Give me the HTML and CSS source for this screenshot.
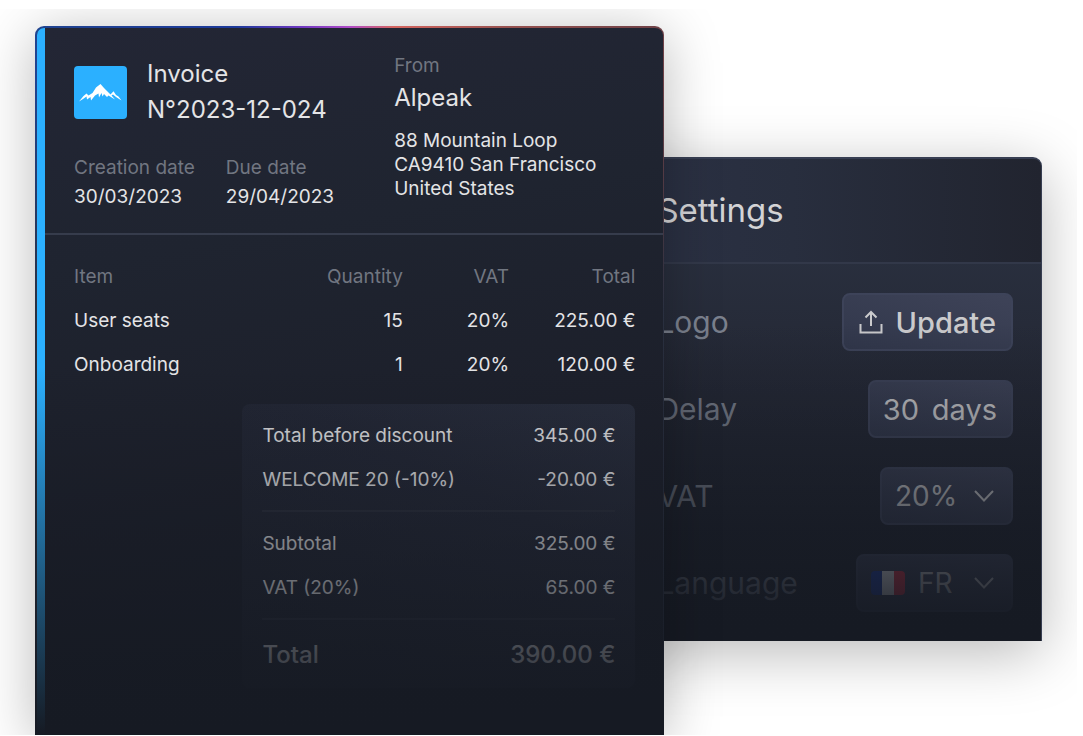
FILE: index.html
```html
<!DOCTYPE html>
<html lang="en">
<head>
<meta charset="utf-8">
<meta name="viewport" content="width=device-width, initial-scale=1">
<title>Invoice N°2023-12-024</title>
<link rel="stylesheet" href="styles.css">
</head>
<body>
<main class="scene">
  <article class="invoice">
    <header class="invoice-header">
      <div class="invoice-identity">
        <div class="invoice-title">
          <svg class="brand" viewBox="0 0 53 53" aria-hidden="true">
            <rect width="53" height="53" rx="4" fill="#2bb0ff"/>
            <path fill="#fff" d="M5 35.500L9.500 30L12.500 27.500L14.500 29.500L18.500 27L22 21.500L26.500 18L30 22L34.500 26.500L36.500 28.500L39.500 25.200L42 29L44.500 30.500L47.500 34.500L42 31L39 28.500L37.500 29.500L41 33.500L34.500 29.500L33 31L30 28L28.500 30.500L27.500 27L25 31.500L24.500 27.500L21 29.500L17 34.500L16.500 31L13 33.500L12.500 30.500L9 33Z"/>
          </svg>
          <h1 class="heading">Invoice<br>N°2023-12-024</h1>
        </div>
        <dl class="dates">
          <div><dt>Creation date</dt><dd>30/03/2023</dd></div>
          <div><dt>Due date</dt><dd>29/04/2023</dd></div>
        </dl>
      </div>
      <section class="sender">
        <p class="muted">From</p>
        <h2 class="heading">Alpeak</h2>
        <address class="address">88 Mountain Loop<br>CA9410 San Francisco<br>United States</address>
      </section>
    </header>
    <div class="invoice-body">
      <table class="items">
        <thead>
          <tr><th class="col-item">Item</th><th class="col-quantity">Quantity</th><th class="col-vat">VAT</th><th class="col-total">Total</th></tr>
        </thead>
        <tbody>
          <tr><td>User seats</td><td>15</td><td>20%</td><td>225.00 €</td></tr>
          <tr><td>Onboarding</td><td>1</td><td>20%</td><td>120.00 €</td></tr>
        </tbody>
      </table>
      <div class="totals">
        <dl class="totals-group">
          <div><dt>Total before discount</dt><dd>345.00 €</dd></div>
          <div><dt>WELCOME 20 (-10%)</dt><dd>-20.00 €</dd></div>
        </dl>
        <dl class="totals-group">
          <div><dt>Subtotal</dt><dd>325.00 €</dd></div>
          <div><dt>VAT (20%)</dt><dd>65.00 €</dd></div>
        </dl>
        <dl class="totals-group totals-final">
          <div><dt>Total</dt><dd>390.00 €</dd></div>
        </dl>
      </div>
    </div>
  </article>

  <section class="settings">
    <header class="settings-header"><h2 class="settings-title">Settings</h2></header>
    <form class="settings-form">
      <div class="setting">
        <span class="setting-name" id="logo-label">Logo</span>
        <button class="control" type="button" aria-describedby="logo-label">
          <svg class="icon-upload" viewBox="0 0 24 24" aria-hidden="true"><path d="M1.500 14V22.500H22.500V14M12 16V2.500M6.500 7.500L12 2L17.500 7.500"/></svg>
          <span class="control-strong">Update</span>
        </button>
      </div>
      <div class="setting">
        <label class="setting-name" for="delay">Delay</label>
        <span class="control control-delay"><input class="number" id="delay" type="text" inputmode="numeric" value="30"><span>days</span></span>
      </div>
      <div class="setting">
        <label class="setting-name" for="vat">VAT</label>
        <span class="control control-select"><select class="choice choice-vat" id="vat"><option>20%</option></select><svg class="chevron" viewBox="0 0 20 12" aria-hidden="true"><path d="M1 1L10 10.500L19 1"/></svg></span>
      </div>
      <div class="setting">
        <label class="setting-name" for="language">Language</label>
        <span class="control control-select"><svg class="flag" viewBox="0 0 34 24" aria-hidden="true"><path fill="#173bb0" d="M4 0H11V24H4A4 4 0 0 1 0 20V4A4 4 0 0 1 4 0Z"/><path fill="#f3f4f6" d="M11 0H23V24H11Z"/><path fill="#ed2f45" d="M23 0H30A4 4 0 0 1 34 4V20A4 4 0 0 1 30 24H23Z"/></svg><select class="choice choice-language" id="language"><option>FR</option></select><svg class="chevron" viewBox="0 0 20 12" aria-hidden="true"><path d="M1 1L10 10.500L19 1"/></svg></span>
      </div>
    </form>
  </section>
</main>
</body>
</html>
```

FILE: styles.css
```css
* { box-sizing: border-box; }

body {
  margin: 0;
  background: #fff;
  color: #e4e4e6;
  font-family: Inter, "Liberation Sans", sans-serif;
  font-size: 19px;
  line-height: 29px;
}

h1, h2, p, dl, dd { margin: 0; }

.scene {
  display: grid;
  grid-template-columns: 5fr 3fr;
  align-items: start;
  margin: 9px 6px 0 0;
  padding: 17px 35px 0;
  overflow: hidden;
}

/* Invoice card */
.invoice {
  position: relative;
  z-index: 1;
  grid-column: 1;
  grid-row: 1;
  padding-left: 8px;
  overflow: hidden;
  border: solid transparent;
  border-width: 2px 1px 0 2px;
  border-radius: 9px 9px 0 0;
  background:
    linear-gradient(#2bb0ff, #2bb0ff) 0 0 / 8px 100% no-repeat padding-box,
    linear-gradient(170deg, #232635 0%, #1f2430 30%, #1c1f2a 60%, #161a23 100%) padding-box,
    linear-gradient(#2a304000 8%, #2a3040 40%, #161a23 100%) border-box,
    linear-gradient(90deg, #20438f 0%, #1d3a9a 32%, #6c38c0 42%, #b04cc8 50%, #d4655f 57%, #96514f 75%, #6e4147 100%) border-box;
  box-shadow: 0 8px 56px rgba(0, 0, 0, 0.28);
}

/* Fades the lower half of the card into its base colour */
.invoice::after,
.settings::after {
  content: "";
  position: absolute;
  inset: 0;
  pointer-events: none;
}

.invoice::after { background: linear-gradient(#161a2300 48%, #161a23 100%); }

.invoice-header {
  display: grid;
  grid-template-columns: 4fr 3fr;
  padding: 23px 29px 22px 29px;
  border-bottom: 2px solid #363c4c;
}

.invoice-identity { padding-top: 5px; }

.invoice-title {
  display: flex;
  align-items: center;
  gap: 20px;
}

.brand {
  width: 53px;
  height: 53px;
}

.heading {
  font-size: 24px;
  font-weight: 400;
  line-height: 36px;
}

.dates {
  display: flex;
  gap: 31px;
  margin-top: 25px;
}

.muted, .dates dt, .items th {
  color: #717681;
  font-weight: 400;
}

.address {
  margin-top: 13px;
  font-style: normal;
  line-height: 24px;
}

.invoice-body { padding: 19px 28px 47px 29px; }

.items {
  width: 100%;
  table-layout: fixed;
  border-collapse: collapse;
}

.items th, .items td {
  height: 44px;
  padding: 0;
  text-align: right;
}

.items th:first-child, .items td:first-child { text-align: left; }

.col-item { width: 30%; }
.col-quantity { width: 160px; }
.col-vat { width: 106px; }
.col-total { width: 126px; }

.totals {
  width: 70%;
  margin: 18px 0 0 auto;
  padding: 0 20px;
  border-radius: 8px;
  background: linear-gradient(205deg, #282d3c 0%, #222634 35%, #1d212c 100%);
}

.totals-group { padding: 10px 0 8px; }

.totals-group + .totals-group { border-top: 2px solid #2a2e3b; }

.totals-group div {
  display: flex;
  justify-content: space-between;
  line-height: 44px;
}

.totals-final div {
  font-size: 24px;
  font-weight: 500;
  line-height: 50px;
}

/* Settings card */
.settings {
  position: relative;
  grid-column: 2;
  grid-row: 1;
  margin: 131px 0 0 -37px;
  overflow: hidden;
  border: solid #373e52;
  border-width: 2px 1px 0;
  border-radius: 9px 9px 0 0;
  background: linear-gradient(#292f3e 20%, #242835 45%, #161a23 100%);
  box-shadow: 0 12px 60px rgba(0, 0, 0, 0.28);
}

.settings::after { background: linear-gradient(#161a2300 34%, #161a23 100%); }

.settings-header {
  padding: 31px 29px 32px;
  border-bottom: 2px solid #323849;
  background: linear-gradient(90deg, #2b3144 0%, #282e3e 40%, #21242f 100%);
}

.settings-title {
  color: #d3d3d5;
  font-size: 33px;
  font-weight: 400;
  line-height: 40px;
}

.settings-form {
  display: grid;
  gap: 29px;
  padding: 29px 28px 29px 29px;
}

.setting {
  display: flex;
  align-items: center;
  justify-content: space-between;
  font-size: 30px;
}

.setting-name { color: #7b818e; }

.control {
  display: flex;
  align-items: center;
  gap: 13px;
  height: 58px;
  padding: 0 15px;
  border: 2px solid #3d4359;
  border-radius: 8px;
  background: linear-gradient(195deg, #3e4358, #31374b);
  color: #cbcbcd;
  font: inherit;
  font-size: 29px;
}

.control-strong { font-weight: 500; }

.control-delay { padding: 0 14px 0 13px; }

.control-select {
  padding: 0 17px 0 13px;
  font-size: 28px;
}

.icon-upload, .chevron {
  fill: none;
  stroke: currentColor;
  stroke-width: 2;
}

.icon-upload {
  width: 24px;
  height: 24px;
}

.chevron {
  width: 20px;
  height: 12px;
}

.flag {
  width: 34px;
  height: 24px;
}

.number, .choice {
  appearance: none;
  margin: 0;
  padding: 0;
  border: 0;
  background: none;
  color: inherit;
  font: inherit;
}

.number { width: 36px; }
.choice-vat { width: 66px; }
.choice-language { width: 43px; }
```
